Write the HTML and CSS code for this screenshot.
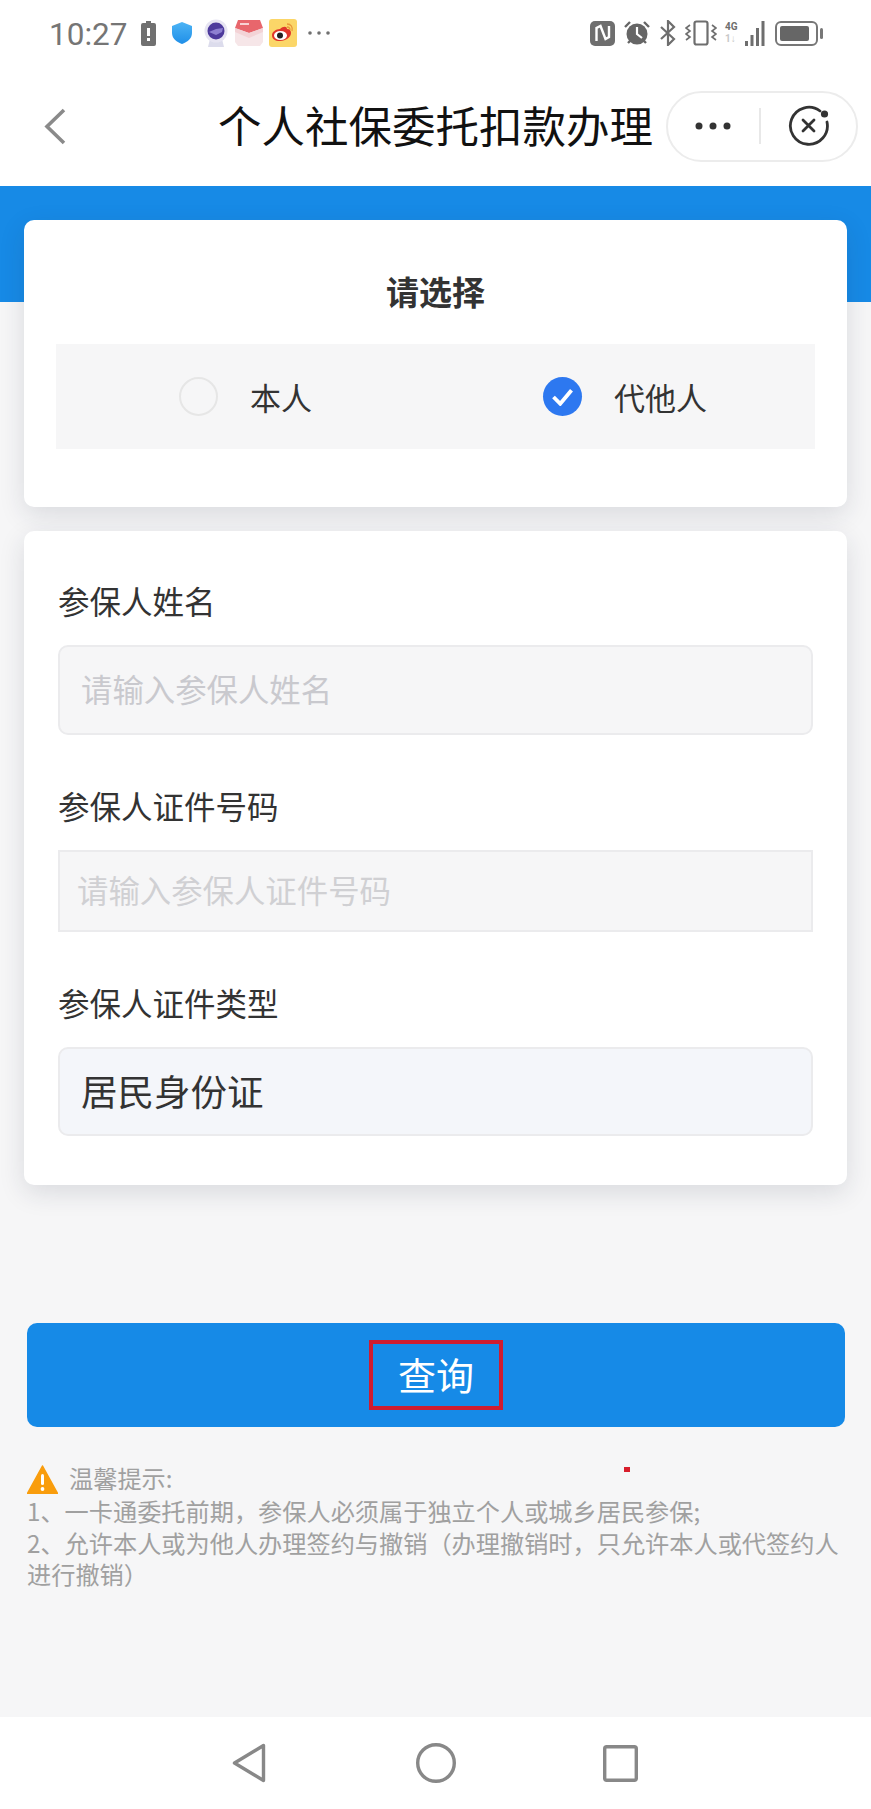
FILE: index.html
```html
<!DOCTYPE html>
<html lang="zh-CN">
<head>
<meta charset="utf-8">
<title>个人社保委托扣款办理</title>
<link rel="stylesheet" href="styles.css">
</head>
<body>
<div class="page">
  <header class="statusbar">
    <div class="status-left">
      <span class="time">10:27</span>
      <svg class="ic-batt" viewBox="0 0 15 25"><path d="M5 0h5v2h3a2 2 0 0 1 2 2v19a2 2 0 0 1-2 2H2a2 2 0 0 1-2-2V4a2 2 0 0 1 2-2h3z" fill="#707070"/><rect x="6" y="7" width="3" height="8" fill="#fff"/><rect x="6" y="17" width="3" height="3" fill="#fff"/></svg>
      <svg class="ic-shield" viewBox="0 0 20 22"><defs><linearGradient id="sh" x1="0" y1="0" x2="0" y2="1"><stop offset="0" stop-color="#4db4f5"/><stop offset="1" stop-color="#1f8fe8"/></linearGradient></defs><path d="M10 0l10 4v7c0 6-5 9-10 11C5 20 0 17 0 11V4z" fill="url(#sh)"/></svg>
      <svg class="ic-cam" viewBox="0 0 24 28"><path d="M6 20h12l2 8H4z" fill="#dcdcec"/><circle cx="12" cy="12" r="11.500" fill="#e6e4f2"/><circle cx="12" cy="12" r="8.500" fill="#4d3a9c"/><path d="M5 13l7-3 7-1-1 4-6 3z" fill="#8d7fd0"/></svg>
      <svg class="ic-box" viewBox="0 0 28 26"><path d="M0 8h28v14l-3 4H3l-3-4z" fill="#f6e6e8"/><path d="M3 0h22l3 8-14 5L0 8z" fill="#e8666c"/><path d="M0 8l14 5 14-5v4l-14 6L0 12z" fill="#f3d3d6"/><path d="M5 4h9" stroke="#fff" stroke-width="1.400"/></svg>
      <svg class="ic-weibo" viewBox="0 0 28 28"><rect width="28" height="28" rx="3" fill="#fbd668"/><path d="M11 10c3-3 7-3 7 0 3 0 4 2 4 4 0 4-5 8-11 8-5 0-8-2-8-6 0-3 4-6 8-6z" fill="#e0352b"/><ellipse cx="11.500" cy="16.500" rx="6.500" ry="4.500" fill="#fff"/><circle cx="11" cy="16.500" r="3" fill="#222"/><path d="M18 5c4 0 6 3 5 7M18 8c2 0 3 1 3 3" fill="none" stroke="#e8963a" stroke-width="1.300"/></svg>
      <svg class="ic-more" viewBox="0 0 22 4"><circle cx="2" cy="2" r="1.800" fill="#707070"/><circle cx="11" cy="2" r="1.800" fill="#707070"/><circle cx="20" cy="2" r="1.800" fill="#707070"/></svg>
    </div>
    <div class="status-right">
      <svg class="ic-nfc" viewBox="0 0 25 25"><rect width="25" height="25" rx="5" fill="#6e6e6e"/><path d="M6.500 20V7l4-2 5 13 3.500-2V5" fill="none" stroke="#fff" stroke-width="2.400"/></svg>
      <svg class="ic-alarm" viewBox="0 0 28 26"><circle cx="14" cy="14" r="10.500" fill="#666"/><path d="M14 7v7l5 4" fill="none" stroke="#fff" stroke-width="2.200"/><path d="M2 7l5-5M26 7l-5-5M5 23l3-3M23 23l-3-3" stroke="#666" stroke-width="2.400"/></svg>
      <svg class="ic-bt" viewBox="0 0 16 26"><path d="M1 7l13 12-6 6V1l6 6L1 19" fill="none" stroke="#6e6e6e" stroke-width="2.200"/></svg>
      <svg class="ic-vib" viewBox="0 0 32 26"><rect x="9.500" y="1.500" width="13" height="23" rx="2" fill="none" stroke="#6e6e6e" stroke-width="2.200"/><path d="M5 5L1 8l4 3-4 3 4 3-4 3M27 5l4 3-4 3 4 3-4 3 4 3" fill="none" stroke="#6e6e6e" stroke-width="1.600"/></svg>
      <div class="signal">
        <div class="net"><span class="net-on">4G</span><span class="net-off">1↓</span></div>
        <svg class="ic-bars" viewBox="0 0 20 25"><rect x="0" y="20" width="3" height="5" fill="#6e6e6e"/><rect x="5.500" y="14" width="3" height="11" fill="#6e6e6e"/><rect x="11" y="7" width="3" height="18" fill="#6e6e6e"/><rect x="16.500" y="0" width="3" height="25" fill="#6e6e6e"/></svg>
      </div>
      <svg class="ic-power" viewBox="0 0 49 25"><rect x="1" y="1" width="41" height="23" rx="5" fill="none" stroke="#777" stroke-width="2"/><rect x="5" y="5" width="29" height="15" rx="2" fill="#666"/><rect x="45" y="7" width="3" height="11" rx="1.500" fill="#777"/></svg>
    </div>
  </header>

  <nav class="titlebar">
    <svg class="back" viewBox="0 0 22 37"><path d="M20 2L3 18.500 20 35" fill="none" stroke="#8a8a8a" stroke-width="3.600"/></svg>
    <h1 class="title">个人社保委托扣款办理</h1>
    <div class="capsule">
      <svg class="cap-more" viewBox="0 0 36 8"><circle cx="4" cy="4" r="3.500" fill="#333"/><circle cx="18" cy="4" r="3.500" fill="#333"/><circle cx="32" cy="4" r="3.500" fill="#333"/></svg>
      <span class="cap-line"></span>
      <svg class="cap-close" viewBox="0 0 42 42"><path d="M32 6A18.500 18.500 0 1 0 39 17" fill="none" stroke="#333" stroke-width="2.800" stroke-linecap="round"/><circle cx="36.500" cy="9" r="3.600" fill="#333"/><path d="M15 15l11 11M26 15L15 26" stroke="#333" stroke-width="2.800" stroke-linecap="round"/></svg>
    </div>
  </nav>

  <main class="main">
    <section class="card card-select">
      <h2 class="select-title">请选择</h2>
      <div class="options">
        <div class="option">
          <span class="radio"></span>
          <span class="option-text">本人</span>
        </div>
        <div class="option">
          <span class="radio radio-on">
            <svg class="check" viewBox="0 0 20 16"><path d="M2 8l6 6L18 2" fill="none" stroke="#fff" stroke-width="3.400"/></svg>
          </span>
          <span class="option-text">代他人</span>
        </div>
      </div>
    </section>

    <section class="card card-form">
      <div class="field">
        <div class="label">参保人姓名</div>
        <div class="input input-name">请输入参保人姓名</div>
      </div>
      <div class="field">
        <div class="label">参保人证件号码</div>
        <div class="input input-id">请输入参保人证件号码</div>
      </div>
      <div class="field">
        <div class="label">参保人证件类型</div>
        <div class="input input-type">居民身份证</div>
      </div>
    </section>

    <button class="query" type="button"><span class="query-text">查询</span></button>

    <div class="tips">
      <span class="red-dot"></span>
      <div class="tips-head">
        <svg class="warn" viewBox="0 0 31 29"><path d="M15.500 1L30.500 28.500H.5z" fill="#f99d0d" stroke="#f99d0d" stroke-width="1.500" stroke-linejoin="round"/><rect x="14" y="9" width="3" height="11" rx="1.500" fill="#fff"/><circle cx="15.500" cy="24" r="1.900" fill="#fff"/></svg>
        <span class="tips-title">温馨提示:</span>
      </div>
      <p class="tip">1、一卡通委托前期，参保人必须属于独立个人或城乡居民参保;</p>
      <p class="tip">2、允许本人或为他人办理签约与撤销（办理撤销时，只允许本人或代签约人进行撤销）</p>
    </div>
  </main>

  <footer class="sysnav">
    <svg class="sys-back" viewBox="0 0 34 40"><path d="M31.500 2.500v35L2.500 20z" fill="none" stroke="#888" stroke-width="3.400" stroke-linejoin="round"/></svg>
    <svg class="sys-home" viewBox="0 0 42 40"><circle cx="21" cy="20" r="18.300" fill="none" stroke="#888" stroke-width="3.400"/></svg>
    <svg class="sys-recent" viewBox="0 0 35 37"><rect x="1.700" y="1.700" width="31.600" height="33.600" rx="2" fill="none" stroke="#888" stroke-width="3.400"/></svg>
  </footer>
</div>
</body>
</html>
```

FILE: styles.css
```css
* {
  box-sizing: border-box;
}

html,
body {
  margin: 0;
  padding: 0;
}

body {
  font-family: "Noto Sans CJK SC", "Noto Sans", sans-serif;
  background: #fff;
}

.page {
  display: flex;
  flex-direction: column;
  width: 871px;
  height: 1809px;
  overflow: hidden;
}

/* status bar */
.statusbar {
  display: flex;
  flex: none;
  justify-content: space-between;
  align-items: center;
  height: 66px;
  padding: 0 47px 0 49px;
  background: #fff;
}

.status-left,
.status-right,
.signal {
  display: flex;
  align-items: center;
}

.time {
  width: 78px;
  padding-top: 3px;
  font-family: Roboto, sans-serif;
  font-size: 31.500px;
  line-height: 36px;
  color: #757575;
  white-space: nowrap;
}

.ic-batt {
  width: 15px;
  height: 25px;
  margin-left: 14px;
}

.ic-shield {
  width: 20px;
  height: 22px;
  margin-left: 16px;
}

.ic-cam {
  width: 24px;
  height: 28px;
  margin-left: 12px;
}

.ic-box {
  width: 28px;
  height: 26px;
  margin-left: 7px;
}

.ic-weibo {
  width: 28px;
  height: 28px;
  margin-left: 6px;
}

.ic-more {
  width: 22px;
  height: 4px;
  margin-left: 11px;
}

.ic-nfc {
  width: 25px;
  height: 25px;
}

.ic-alarm {
  width: 28px;
  height: 26px;
  margin-left: 8px;
}

.ic-bt {
  width: 16px;
  height: 26px;
  margin-left: 9px;
}

.ic-vib {
  width: 32px;
  height: 26px;
  margin-left: 9px;
}

.signal {
  margin-left: 8px;
}

.net {
  display: flex;
  flex-direction: column;
  width: 20px;
  font-family: Roboto, sans-serif;
  font-size: 10px;
  font-weight: 700;
  line-height: 12px;
}

.net-on {
  color: #6e6e6e;
}

.net-off {
  color: #c8c8c8;
}

.ic-bars {
  width: 20px;
  height: 25px;
}

.ic-power {
  width: 49px;
  height: 25px;
  margin-left: 10px;
}

/* title bar */
.titlebar {
  display: flex;
  flex: none;
  align-items: center;
  height: 120px;
  padding: 0 13px 0 44px;
  background: #fff;
}

.back {
  flex: none;
  width: 22px;
  height: 37px;
}

.title {
  flex: none;
  margin: 0 0 0 152px;
  padding-bottom: 2px;
  font-size: 43.500px;
  font-weight: 400;
  line-height: 60px;
  color: #111;
  white-space: nowrap;
}

.capsule {
  display: flex;
  flex: none;
  align-items: center;
  width: 192px;
  height: 71px;
  margin-left: auto;
  padding-left: 27px;
  border: 2px solid #ececec;
  border-radius: 36px;
  background: #fff;
}

.cap-more {
  width: 36px;
  height: 8px;
}

.cap-line {
  width: 2px;
  height: 36px;
  margin-left: 28px;
  background: #e8e8e8;
}

.cap-close {
  width: 42px;
  height: 42px;
  margin-left: 27px;
}

/* main */
.main {
  position: relative;
  flex: 1;
  padding-top: 34px;
  background: linear-gradient(#178ae6 116px, #f6f6f7 116px);
}

.card {
  margin: 0 24px;
  border-radius: 10px;
  background: #fff;
  box-shadow: 0 8px 26px rgba(30, 40, 60, 0.13);
}

.card-select {
  height: 287px;
  padding: 49px 32px 0;
}

.select-title {
  height: 44px;
  margin: 0 0 31px;
  font-size: 33px;
  font-weight: 700;
  line-height: 44px;
  text-align: center;
  color: #333;
}

.options {
  display: grid;
  grid-template-columns: 364px 1fr;
  align-items: center;
  height: 105px;
  padding: 0 0 0 123px;
  background: #f6f6f7;
}

.option {
  display: flex;
  align-items: center;
  gap: 32px;
}

.radio {
  display: flex;
  flex: none;
  justify-content: center;
  align-items: center;
  width: 39px;
  height: 39px;
  border: 2px solid #e6e6e6;
  border-radius: 50%;
  background: #f6f6f7;
}

.radio-on {
  border: 0;
  background: #2d78f0;
}

.check {
  width: 23px;
  height: 18px;
}

.option-text {
  font-size: 31px;
  line-height: 44px;
  color: #333;
}

.card-form {
  margin-top: 24px;
  padding: 48px 34px 49px;
}

.field {
  margin-top: 49px;
}

.field:first-child {
  margin-top: 0;
}

.label {
  height: 44px;
  margin-bottom: 22px;
  font-size: 31.500px;
  line-height: 42px;
  color: #333;
}

.input {
  display: flex;
  align-items: center;
  padding-bottom: 3px;
  font-size: 31.400px;
  border: 2px solid #ebebed;
}

.input-name {
  height: 90px;
  padding-left: 21px;
  border-radius: 10px;
  background: #f6f6f7;
  color: #c9c9ce;
}

.input-id {
  height: 82px;
  padding-left: 17px;
  background: #f6f6f7;
  color: #d0d0d3;
}

.input-type {
  height: 89px;
  padding-left: 21px;
  border-radius: 10px;
  font-size: 36.500px;
  background: #f4f6fa;
  color: #333;
}

/* button */
.query {
  display: flex;
  justify-content: center;
  align-items: center;
  width: 818px;
  height: 104px;
  margin: 138px 0 0 27px;
  padding: 0;
  border: 0;
  border-radius: 10px;
  font-family: inherit;
  background: #168ae7;
}

.query-text {
  display: flex;
  justify-content: center;
  align-items: center;
  width: 134px;
  height: 70px;
  padding-bottom: 2px;
  border: 4px solid #cf1c30;
  font-size: 38px;
  line-height: 50px;
  color: #fff;
}

/* tips */
.tips {
  position: relative;
  margin-top: 36px;
  padding: 0 26px 0 27px;
  font-size: 24.200px;
  line-height: 31.500px;
  color: #a0a0a0;
}

.tips-head {
  display: flex;
  align-items: center;
  gap: 11px;
  height: 32px;
}

.tips-title {
  padding-bottom: 3px;
  line-height: 28px;
}

.warn {
  flex: none;
  width: 31px;
  height: 29px;
}

.tip {
  margin: 0;
}

.red-dot {
  position: absolute;
  top: 4px;
  left: 624px;
  width: 6px;
  height: 5px;
  background: #d81e2c;
}

/* system nav */
.sysnav {
  display: flex;
  flex: none;
  align-items: center;
  height: 92px;
  padding: 0 0 0 232px;
  background: #fff;
}

.sys-back {
  width: 34px;
  height: 40px;
}

.sys-home {
  width: 42px;
  height: 40px;
  margin-left: 149px;
}

.sys-recent {
  width: 35px;
  height: 37px;
  margin-left: 146px;
}
```
